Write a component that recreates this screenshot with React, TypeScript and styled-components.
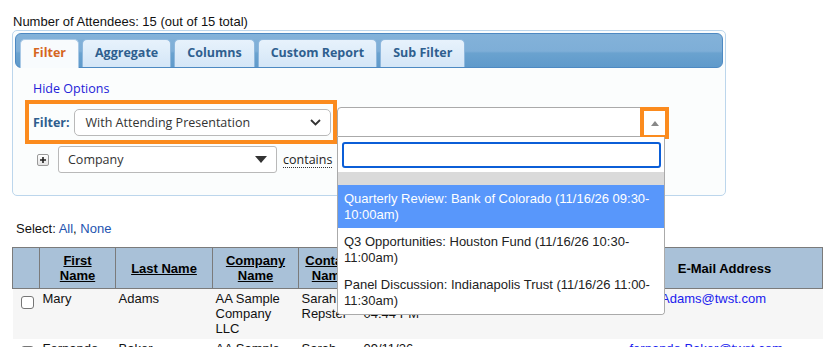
import React from "react";
import styled, { createGlobalStyle } from "styled-components";

const GlobalStyle = createGlobalStyle`
  body {
    margin: 0;
    background: #fff;
    font-family: "Liberation Sans", Arial, sans-serif;
    font-size: 13px;
    color: #111;
  }
`;

const Page = styled.div`
  padding: 14px 0 0 12px;
  width: 811px;
  height: 333px;
  overflow: hidden;
`;

const Title = styled.div`
  line-height: 15px;
  margin-left: 1px;
`;

const Panel = styled.div`
  margin-top: 1px;
  width: 714px;
  box-sizing: border-box;
  border: 1px solid #bcd6ec;
  border-radius: 5px;
  padding: 2px;
  background: #fbfdfd;
`;

const TabBar = styled.div`
  height: 35px;
  box-sizing: border-box;
  border: 1px solid #4d89c2;
  border-radius: 6px;
  background: linear-gradient(180deg, #83b2d9 0%, #7eaed7 52%, #6aa2cf 58%, #5f9acb 100%);
  display: flex;
  align-items: flex-end;
  gap: 3px;
  padding-left: 4px;
`;

const Tab = styled.div<{ $active?: boolean }>`
  height: ${(p) => (p.$active ? "29px" : "28px")};
  margin-bottom: ${(p) => (p.$active ? "-1px" : "0")};
  box-sizing: border-box;
  padding: 0 12px;
  border: 1px solid ${(p) => (p.$active ? "#a9c9e6" : "#8fb8dd")};
  border-bottom: none;
  border-radius: 5px 5px 0 0;
  background: ${(p) => (p.$active ? "#f8fbfd" : "linear-gradient(180deg, #e7f2fc 0%, #d4e6f7 100%)")};
  color: ${(p) => (p.$active ? "#d6661f" : "#2f5f8f")};
  font-family: "Open Sans", sans-serif;
  font-weight: 700;
  font-size: 12.5px;
  line-height: 26px;
  white-space: nowrap;
`;

const Content = styled.div`
  padding: 12px 0 20px 10px;
`;

const HideLink = styled.a`
  display: block;
  margin-left: 8px;
  font-family: "Open Sans", sans-serif;
  font-size: 12.5px;
  line-height: 17px;
  color: #2323d8;
  text-decoration: none;
`;

const FilterRow = styled.div`
  display: flex;
  align-items: center;
  margin-top: 3px;
`;

const Highlight = styled.div`
  display: flex;
  align-items: center;
  width: 312px;
  height: 44px;
  box-sizing: border-box;
  border: 4px solid #fb8b1e;
  padding: 0 2px 0 4px;
`;

const Label = styled.span`
  font-family: "Open Sans", sans-serif;
  font-weight: 700;
  font-size: 12.5px;
  color: #2e5d8e;
`;

const NativeSelect = styled.div<{ $w: number; $r: number }>`
  width: ${(p) => p.$w}px;
  height: 27px;
  box-sizing: border-box;
  display: flex;
  align-items: center;
  justify-content: space-between;
  border: 1px solid #b9b9b9;
  border-radius: ${(p) => p.$r}px;
  background: #fff;
  padding: 0 9px 0 9px;
  font-family: "Open Sans", sans-serif;
  font-size: 12.5px;
  color: #333;
`;

const FilterSelect = styled(NativeSelect)`
  margin-left: 4px;
  padding-left: 11px;
`;

const Select2 = styled.div`
  position: relative;
  width: 328px;
  height: 30px;
  box-sizing: border-box;
  border: 1px solid #aaa;
  border-radius: 4px 4px 0 0;
  background: #fff;
`;

const ArrowMark = styled.div`
  position: absolute;
  top: -1px;
  right: -5px;
  width: 29px;
  height: 32px;
  box-sizing: border-box;
  border: 4px solid #fb8b1e;
  background: #fff;
  display: flex;
  align-items: center;
  justify-content: center;
`;

const UpTriangle = styled.span`
  width: 0;
  height: 0;
  border-left: 4px solid transparent;
  border-right: 4px solid transparent;
  border-bottom: 5px solid #888;
`;

const Dropdown = styled.div`
  position: absolute;
  top: 29px;
  left: -1px;
  width: 328px;
  box-sizing: border-box;
  border: 1px solid #aaa;
  border-top: none;
  border-radius: 0 0 4px 4px;
  background: #fff;
  z-index: 10;
  overflow: hidden;
`;

const Search = styled.div`
  margin: 5px 3px 4px 4px;
  height: 26px;
  box-sizing: border-box;
  border: 2px solid #0b5ed7;
  border-radius: 3px;
`;

const GrayBand = styled.div`
  height: 13px;
  background: #dadada;
`;

const Option = styled.div<{ $hl?: boolean }>`
  padding: 6px;
  line-height: 15.5px;
  font-size: 13px;
  background: ${(p) => (p.$hl ? "#5897fb" : "#fff")};
  color: ${(p) => (p.$hl ? "#fff" : "#222")};
`;

const CondRow = styled.div`
  display: flex;
  align-items: center;
  margin-top: 2px;
  padding-left: 12px;
`;

const PlusBox = styled.span`
  width: 12px;
  height: 12px;
  box-sizing: border-box;
  border: 1px solid #999;
  border-radius: 2px;
  background: linear-gradient(180deg, #fff, #e4e4e4);
  display: flex;
  align-items: center;
  justify-content: center;
  margin-right: 9px;
`;

const DownTriangle = styled.span`
  width: 0;
  height: 0;
  border-left: 6px solid transparent;
  border-right: 6px solid transparent;
  border-top: 7px solid #333;
`;

const Contains = styled.span`
  margin-left: 6px;
  font-family: "Open Sans", sans-serif;
  font-size: 12.5px;
  line-height: 15px;
  color: #222;
  border-bottom: 1px dotted #333;
`;

const SelectLine = styled.div`
  margin-top: 25px;
  padding-left: 4px;
  line-height: 15px;
`;

const BlueLink = styled.a`
  color: #2354b0;
  text-decoration: none;
`;

const Table = styled.table`
  margin-top: 11px;
  width: 810px;
  border-collapse: collapse;
  table-layout: fixed;
`;

const Th = styled.th<{ $w: number }>`
  width: ${(p) => p.$w}px;
  box-sizing: border-box;
  background: #a9c1d8;
  border: 1px solid #7b7b7b;
  padding: 5px 3px;
  font-weight: 700;
  font-size: 13px;
  line-height: 15px;
  text-align: center;
  vertical-align: middle;
  color: #000;
`;

const SortLink = styled.a`
  color: #000;
  text-decoration: underline;
`;

const Tr = styled.tr<{ $shade?: boolean }>`
  background: ${(p) => (p.$shade ? "#f6f6f6" : "#fff")};
`;

const Td = styled.td`
  padding: 2px 3px 3px;
  vertical-align: top;
  line-height: 15px;
  font-size: 13px;
  color: #111;
`;

const Check = styled.input`
  appearance: none;
  display: block;
  width: 13px;
  height: 13px;
  margin: 5px 0 0 5px;
  box-sizing: border-box;
  border: 1px solid #767676;
  border-radius: 3px;
  background: #fff;
`;

const EmailLink = styled.a`
  color: #2020ee;
  text-decoration: none;
`;

const Chevron = () => (
  <svg width="11" height="7" viewBox="0 0 11 7">
    <path d="M1 1l4.5 4.5L10 1" fill="none" stroke="#333" strokeWidth="1.8" />
  </svg>
);

const Plus = () => (
  <svg width="8" height="8" viewBox="0 0 8 8">
    <path d="M4 1v6M1 4h6" stroke="#222" strokeWidth="1.6" />
  </svg>
);

const tabs = ["Filter", "Aggregate", "Columns", "Custom Report", "Sub Filter"];

const rows = [
  { first: "Mary", last: "Adams", company: "AA Sample Company LLC", contact: "Sarah Repster", date: "09/11/26 04:44 PM", email: "mary.Adams@twst.com" },
  { first: "Fernando", last: "Baker", company: "AA Sample Company LLC", contact: "Sarah Repster", date: "09/11/26 04:44 PM", email: "fernando.Baker@twst.com" },
];

export default function App() {
  return (
    <>
      <GlobalStyle />
      <Page>
        <Title>Number of Attendees: 15 (out of 15 total)</Title>
        <Panel>
          <TabBar>
            {tabs.map((t, i) => (
              <Tab key={t} $active={i === 0}>
                {t}
              </Tab>
            ))}
          </TabBar>
          <Content>
            <HideLink href="#">Hide Options</HideLink>
            <FilterRow>
              <Highlight>
                <Label>Filter:</Label>
                <FilterSelect $w={258} $r={5}>
                  With Attending Presentation
                  <Chevron />
                </FilterSelect>
              </Highlight>
              <Select2>
                <ArrowMark>
                  <UpTriangle />
                </ArrowMark>
                <Dropdown>
                  <Search />
                  <GrayBand />
                  <Option $hl>
                    Quarterly Review: Bank of Colorado (11/16/26 09:30-<wbr />10:00am)
                  </Option>
                  <Option>
                    Q3 Opportunities: Houston Fund (11/16/26 10:30-<wbr />11:00am)
                  </Option>
                  <Option>
                    Panel Discussion: Indianapolis Trust (11/16/26 11:00-<wbr />11:30am)
                  </Option>
                </Dropdown>
              </Select2>
            </FilterRow>
            <CondRow>
              <PlusBox>
                <Plus />
              </PlusBox>
              <NativeSelect $w={219} $r={3}>
                Company
                <DownTriangle />
              </NativeSelect>
              <Contains>contains</Contains>
            </CondRow>
          </Content>
        </Panel>

        <SelectLine>
          Select: <BlueLink href="#">All</BlueLink>, <BlueLink href="#">None</BlueLink>
        </SelectLine>

        <Table>
          <thead>
            <tr>
              <Th $w={27}></Th>
              <Th $w={76}>
                <SortLink href="#">First<br />Name</SortLink>
              </Th>
              <Th $w={97}>
                <SortLink href="#">Last Name</SortLink>
              </Th>
              <Th $w={86}>
                <SortLink href="#">Company<br />Name</SortLink>
              </Th>
              <Th $w={62}>
                <SortLink href="#">Contact<br />Name</SortLink>
              </Th>
              <Th $w={80}>
                <SortLink href="#">Registered</SortLink>
              </Th>
              <Th $w={186}>Phone</Th>
              <Th $w={196}>E-Mail Address</Th>
            </tr>
          </thead>
          <tbody>
            {rows.map((r, i) => (
              <Tr key={r.email} $shade={i % 2 === 0}>
                <Td>
                  <Check type="checkbox" />
                </Td>
                <Td>{r.first}</Td>
                <Td>{r.last}</Td>
                <Td>{r.company}</Td>
                <Td>{r.contact}</Td>
                <Td>{r.date}</Td>
                <Td></Td>
                <Td>
                  <EmailLink href="#">{r.email}</EmailLink>
                </Td>
              </Tr>
            ))}
          </tbody>
        </Table>
      </Page>
    </>
  );
}
